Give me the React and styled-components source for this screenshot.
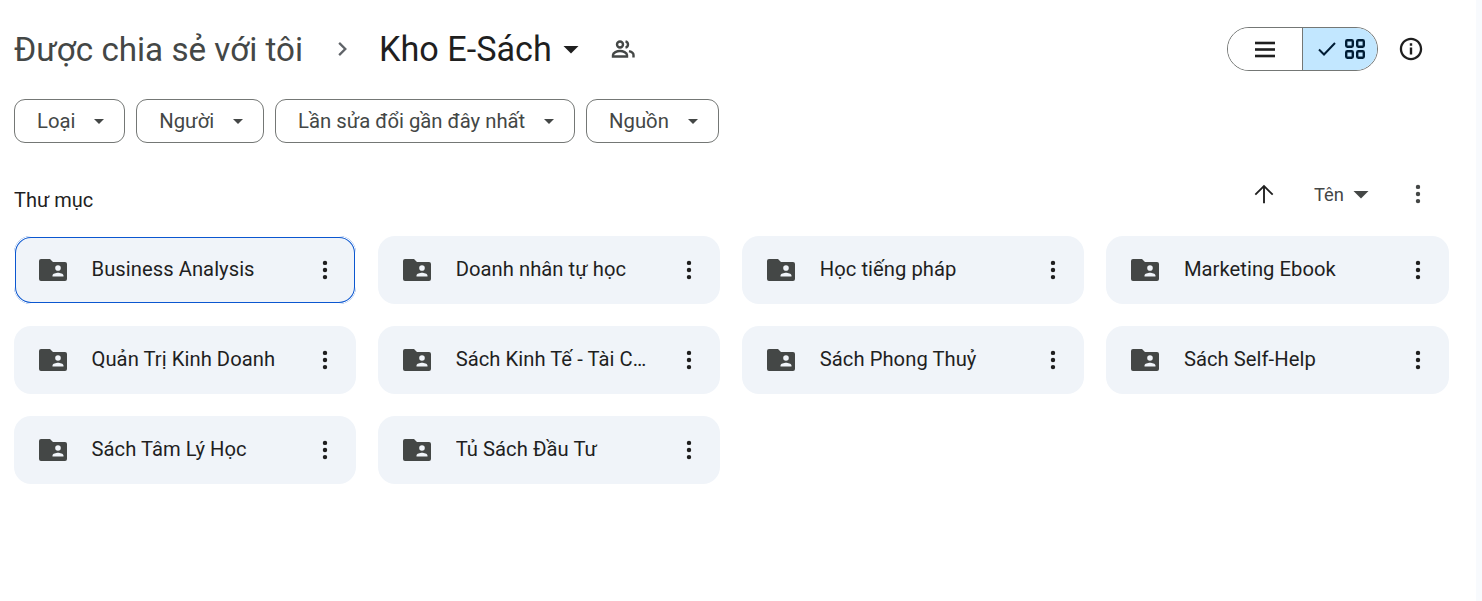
import React from 'react';
import styled, { createGlobalStyle } from 'styled-components';

const Global = createGlobalStyle`
  html, body { margin: 0; background: #fff; }
  body { font-family: Roboto, "Noto Sans", sans-serif; overflow: hidden; }
`;

const Page = styled.div`
  display: flex;
  width: 1482px;
  height: 601px;
`;

const Main = styled.main`
  flex: 1;
  padding: 27px 27.5px 0 14px;
  background: #fff;
`;

const Rail = styled.div`
  width: 6px;
  background: #f8fafd;
`;

const Header = styled.header`
  display: flex;
  align-items: center;
  justify-content: space-between;
  height: 44px;
`;

const Crumbs = styled.div`
  display: flex;
  align-items: center;
`;

const CrumbParent = styled.span`
  font-size: 33.2px;
  color: #444746;
`;

const Chevron = styled.svg`
  width: 28px;
  height: 28px;
  margin: 0 22px 0 26px;
  fill: #5f6368;
`;

const CrumbCurrent = styled.span`
  font-size: 34.2px;
  color: #1f1f1f;
`;

const Caret = styled.svg`
  width: ${p => p.$size}px;
  height: ${p => p.$size}px;
  fill: ${p => p.$color};
  margin-left: ${p => p.$gap}px;
`;

const PeopleIcon = styled.svg`
  width: 24px;
  height: 24px;
  margin-left: 22px;
  fill: none;
  stroke: #444746;
  stroke-width: 2.4;
`;

const Tools = styled.div`
  display: flex;
  align-items: center;
  margin-right: 25.5px;
`;

const Toggle = styled.div`
  display: flex;
  width: 151px;
  height: 44px;
  border: 1px solid #747775;
  border-radius: 22px;
  overflow: hidden;
  box-sizing: border-box;
`;

const ToggleSide = styled.div`
  display: flex;
  align-items: center;
  justify-content: center;
  width: ${p => (p.$on ? '75px' : '74px')};
  gap: 9px;
  padding-left: ${p => (p.$on ? '3px' : '0')};
  padding-right: ${p => (p.$on ? '0' : '1px')};
  box-sizing: border-box;
  background: ${p => (p.$on ? '#c2e7ff' : '#fff')};
  border-left: ${p => (p.$on ? '1px solid #747775' : 'none')};
`;

const BarsIcon = styled.svg`
  width: 20px;
  height: 17px;
  fill: #1f1f1f;
`;

const CheckIcon = styled.svg`
  width: 18px;
  height: 14px;
  fill: none;
  stroke: #001d35;
  stroke-width: 2;
`;

const TilesIcon = styled.svg`
  width: 20px;
  height: 20px;
  fill: none;
  stroke: #001d35;
  stroke-width: 2.4;
`;

const InfoIcon = styled.svg`
  width: 24px;
  height: 24px;
  margin-left: 21px;
  fill: #1f1f1f;
`;

const Filters = styled.div`
  display: flex;
  gap: 11px;
  margin-top: 28px;
`;

const Filter = styled.button`
  display: flex;
  align-items: center;
  height: 44px;
  padding: 0 12.8px 0 22px;
  border: 1px solid #747775;
  border-radius: 11px;
  background: #fff;
  font-family: inherit;
  font-size: 20.3px;
  color: #444746;
  box-sizing: border-box;
`;

const SectionHead = styled.div`
  display: flex;
  align-items: center;
  justify-content: space-between;
  height: 44px;
  margin-top: 29px;
`;

const SectionTitle = styled.h2`
  margin: 12px 0 0;
  font-size: 20px;
  font-weight: 400;
  color: #1f1f1f;
`;

const Sort = styled.div`
  display: flex;
  align-items: center;
  margin-right: 16.5px;
`;

const SortLabel = styled.span`
  margin-left: 36px;
  font-size: 18.4px;
  color: #444746;
`;

const SortIcon = styled.svg`
  width: ${p => p.$size}px;
  height: ${p => p.$size}px;
  fill: ${p => p.$color};
  margin-left: ${p => p.$gap}px;
`;

const Grid = styled.div`
  display: grid;
  grid-template-columns: repeat(4, 1fr);
  gap: 22px;
  margin-top: 20px;
`;

const Card = styled.div`
  display: flex;
  align-items: center;
  height: 68px;
  padding: 0 17px 0 25px;
  border-radius: 17px;
  background: #f0f4f9;
  box-sizing: border-box;
  min-width: 0;
  ${p => p.$selected && 'box-shadow: inset 0 0 0 1px #fff, inset 0 0 0 2px #0b57d0;'}
`;

const FolderIcon = styled.svg`
  width: 28px;
  height: 22px;
  flex: none;
  fill: #444746;
`;

const CardName = styled.span`
  flex: 1;
  min-width: 0;
  margin: 0 22px 2px 24.5px;
  font-size: 20.2px;
  letter-spacing: 0.05px;
  color: #1f1f1f;
  white-space: nowrap;
  overflow: hidden;
  text-overflow: ellipsis;
`;

const MoreIcon = styled.svg`
  width: 28px;
  height: 28px;
  flex: none;
  fill: #1f1f1f;
`;

const folders = [
  'Business Analysis',
  'Doanh nhân tự học',
  'Học tiếng pháp',
  'Marketing Ebook',
  'Quản Trị Kinh Doanh',
  'Sách Kinh Tế - Tài Chính',
  'Sách Phong Thuỷ',
  'Sách Self-Help',
  'Sách Tâm Lý Học',
  'Tủ Sách Đầu Tư',
];

const filters = ['Loại', 'Người', 'Lần sửa đổi gần đây nhất', 'Nguồn'];

const dots = 'M12 7.8a1.9 1.9 0 1 0 0-3.8 1.9 1.9 0 0 0 0 3.8zm0 2.3a1.9 1.9 0 1 0 0 3.8 1.9 1.9 0 0 0 0-3.8zm0 6.1a1.9 1.9 0 1 0 0 3.8 1.9 1.9 0 0 0 0-3.8z';

export default function App() {
  return (
    <Page>
      <Global />
      <Main>
        <Header>
          <Crumbs>
            <CrumbParent>Được chia sẻ với tôi</CrumbParent>
            <Chevron viewBox="0 0 24 24"><path d="M9.4 6 8 7.4 12.6 12 8 16.6 9.4 18l6-6z" /></Chevron>
            <CrumbCurrent>Kho E-Sách</CrumbCurrent>
            <Caret viewBox="0 0 24 24" $size={36} $color="#1f1f1f" $gap={1}><path d="M7 10l5 5 5-5z" /></Caret>
            <PeopleIcon viewBox="0 0 24 24">
              <circle cx="9" cy="7.5" r="3" />
              <path d="M2 19.5V18c0-2.5 4-4 7-4s7 1.500 7 4v1.500z" />
              <path d="M14.500 4.300a3.300 3.300 0 0 1 0 6.400" />
              <path d="M18 14.200c2.500.7 4.500 1.900 4.500 3.800v2.500" />
            </PeopleIcon>
          </Crumbs>
          <Tools>
            <Toggle>
              <ToggleSide>
                <BarsIcon viewBox="0 0 20 17">
                  <rect x="0" y="0.700" width="20" height="2.600" />
                  <rect x="0" y="7.200" width="20" height="2.600" />
                  <rect x="0" y="13.700" width="20" height="2.600" />
                </BarsIcon>
              </ToggleSide>
              <ToggleSide $on>
                <CheckIcon viewBox="0 0 18 14"><path d="M1 7.500l5 5L17 1" /></CheckIcon>
                <TilesIcon viewBox="0 0 20 20">
                  <rect x="1.200" y="1.200" width="6.600" height="6.600" rx="1.200" />
                  <rect x="12.200" y="1.200" width="6.600" height="6.600" rx="1.200" />
                  <rect x="1.200" y="12.200" width="6.600" height="6.600" rx="1.200" />
                  <rect x="12.200" y="12.200" width="6.600" height="6.600" rx="1.200" />
                </TilesIcon>
              </ToggleSide>
            </Toggle>
            <InfoIcon viewBox="0 0 24 24">
              <path d="M10.800 6.300h2.400v2.500h-2.400zm0 4.300h2.400v7h-2.400zM12 .8C5.800.8.800 5.800.8 12s5 11.200 11.200 11.200S23.200 18.200 23.200 12 18.200.8 12 .8zm0 20.100c-4.900 0-8.900-4-8.900-8.900s4-8.900 8.900-8.900 8.900 4 8.900 8.900-4 8.900-8.900 8.900z" />
            </InfoIcon>
          </Tools>
        </Header>

        <Filters>
          {filters.map(f => (
            <Filter key={f}>
              {f}
              <Caret viewBox="0 0 24 24" $size={24} $color="#444746" $gap={12}><path d="M7 10l5 5 5-5z" /></Caret>
            </Filter>
          ))}
        </Filters>

        <SectionHead>
          <SectionTitle>Thư mục</SectionTitle>
          <Sort>
            <SortIcon viewBox="0 0 24 24" $size={28} $color="#1f1f1f" $gap={0}><path d="M4 12l1.100 1.100L11.200 7V20h1.600V7l6.100 6.100L20 12l-8-8-8 8z" /></SortIcon>
            <SortLabel>Tên</SortLabel>
            <SortIcon viewBox="0 0 24 24" $size={36} $color="#444746" $gap={-1}><path d="M7 10l5 5 5-5z" /></SortIcon>
            <SortIcon viewBox="0 0 24 24" $size={28} $color="#444746" $gap={25}><path d={dots} /></SortIcon>
          </Sort>
        </SectionHead>

        <Grid>
          {folders.map((name, i) => (
            <Card key={name} $selected={i === 0}>
              <FolderIcon viewBox="0 0 28 22">
                <path fillRule="evenodd" d="M2 0h9l3 3h12a2 2 0 0 1 2 2v15a2 2 0 0 1-2 2H2a2 2 0 0 1-2-2V2a2 2 0 0 1 2-2zm17 6.200a2.800 2.800 0 1 0 0 5.600 2.800 2.800 0 0 0 0-5.600zM13.500 17.500h11v-1c0-1.800-3.600-2.800-5.500-2.800s-5.500 1-5.500 2.800z" />
              </FolderIcon>
              <CardName>{name}</CardName>
              <MoreIcon viewBox="0 0 24 24"><path d={dots} /></MoreIcon>
            </Card>
          ))}
        </Grid>
      </Main>
      <Rail />
    </Page>
  );
}
